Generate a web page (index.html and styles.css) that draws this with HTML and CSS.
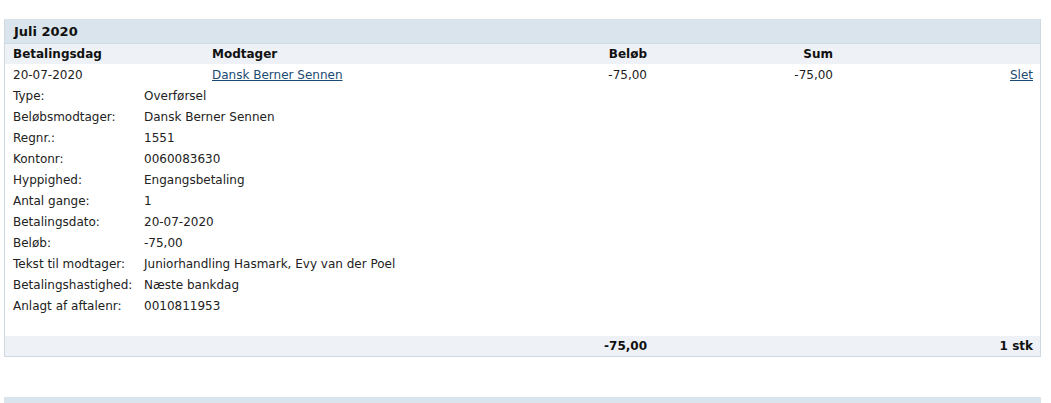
FILE: index.html
```html
<!DOCTYPE html>
<html lang="da">
  <head>
    <meta charset="UTF-8" />
    <title>Betalingsoversigt</title>
    <link rel="stylesheet" href="styles.css">
  </head>
  <body>
    <section class="month">
      <h2>Juli 2020</h2>
      <div class="row head">
        <span>Betalingsdag</span>
        <span>Modtager</span>
        <span class="num">Beløb</span>
        <span class="num">Sum</span>
        <span></span>
      </div>
      <div class="row">
        <span>20-07-2020</span>
        <span><a href="#">Dansk Berner Sennen</a></span>
        <span class="num">-75,00</span>
        <span class="num">-75,00</span>
        <span class="num"><a href="#">Slet</a></span>
      </div>
      <dl class="details">
        <dt>Type:</dt><dd>Overførsel</dd>
        <dt>Beløbsmodtager:</dt><dd>Dansk Berner Sennen</dd>
        <dt>Regnr.:</dt><dd>1551</dd>
        <dt>Kontonr:</dt><dd>0060083630</dd>
        <dt>Hyppighed:</dt><dd>Engangsbetaling</dd>
        <dt>Antal gange:</dt><dd>1</dd>
        <dt>Betalingsdato:</dt><dd>20-07-2020</dd>
        <dt>Beløb:</dt><dd>-75,00</dd>
        <dt>Tekst til modtager:</dt><dd>Juniorhandling Hasmark, Evy van der Poel</dd>
        <dt>Betalingshastighed:</dt><dd>Næste bankdag</dd>
        <dt>Anlagt af aftalenr:</dt><dd>0010811953</dd>
      </dl>
      <div class="row foot">
        <span></span>
        <span></span>
        <span class="num">-75,00</span>
        <span></span>
        <span class="num">1 stk</span>
      </div>
    </section>

    <section class="month next">
      <h2></h2>
    </section>
  </body>
</html>
```

FILE: styles.css
```css
body {
  margin: 0;
  padding: 19px 10px 0 4px;
  font-family: "DejaVu Sans", Verdana, sans-serif;
  font-size: 12px;
  color: #222;
  background: #fff;
}

.month {
  border: 1px solid #cfd9e1;
  border-top: 0;

  h2 {
    margin: 0;
    height: 24px;
    line-height: 26px;
    padding-left: 9px;
    background: #d9e4ec;
    font-size: 13px;
    font-weight: bold;
    color: #111;
  }

  &.next {
    margin-top: 40px;
    border: 0;

    h2 {
      height: 10px;
    }
  }
}

.row {
  display: grid;
  grid-template-columns: 199px 300px 135px 186px 1fr;
  padding: 0 7px 0 8px;
  height: 21px;
  align-items: center;

  .num {
    text-align: right;
  }

  a {
    color: #1b4a73;
  }

  &.head {
    height: 20px;
    background: #eef1f6;
    border-top: 1px solid #cfd9e1;
    font-weight: bold;
    color: #111;
  }

  &.foot {
    height: 20px;
    background: #eef1f6;
    font-weight: bold;
    color: #111;
  }
}

.details {
  display: grid;
  grid-template-columns: 131px 1fr;
  grid-auto-rows: 21px;
  align-items: center;
  margin: 0;
  padding: 0 8px 20px;

  dt, dd {
    margin: 0;
  }
}
```
